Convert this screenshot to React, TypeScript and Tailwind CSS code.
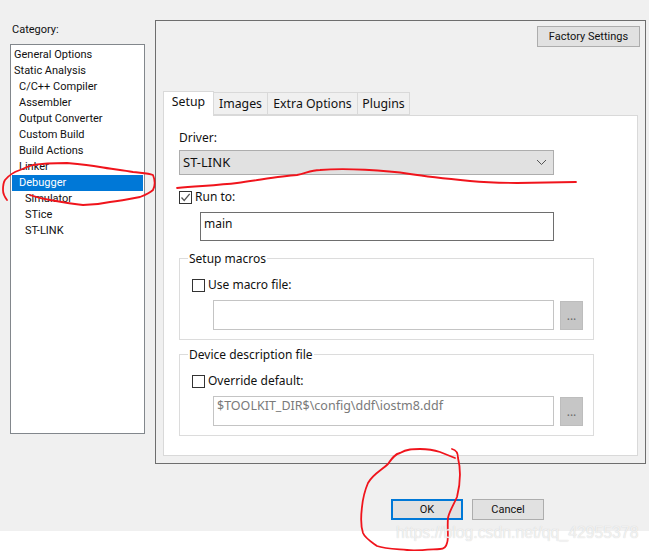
const CATEGORIES = [
  { label: "General Options", indent: "pl-[2px]" },
  { label: "Static Analysis", indent: "pl-[2px]" },
  { label: "C/C++ Compiler", indent: "pl-[7px]" },
  { label: "Assembler", indent: "pl-[7px]" },
  { label: "Output Converter", indent: "pl-[7px]" },
  { label: "Custom Build", indent: "pl-[7px]" },
  { label: "Build Actions", indent: "pl-[7px]" },
  { label: "Linker", indent: "pl-[7px]" },
  { label: "Debugger", indent: "pl-[7px]", active: true },
  { label: "Simulator", indent: "pl-[13px]" },
  { label: "STice", indent: "pl-[13px]" },
  { label: "ST-LINK", indent: "pl-[13px]" },
];

const TABS = [
  { label: "Setup", width: "w-[51px]" },
  { label: "Images", width: "w-[55px]" },
  { label: "Extra Options", width: "w-[91px]" },
  { label: "Plugins", width: "w-[53px]" },
];

function Checkbox({ checked, label }: { checked?: boolean; label: string }) {
  return (
    <div className="flex items-center gap-[3px] h-[14px]">
      <div className="w-[13px] h-[13px] border border-[#333333] bg-white flex items-center justify-center">
        {checked && (
          <svg width="11" height="11" viewBox="0 0 11 11" fill="none">
            <path d="M1.5 5.5 L4.2 8.5 L9.7 1.8" stroke="#555555" strokeWidth="1.3" />
          </svg>
        )}
      </div>
      <span>{label}</span>
    </div>
  );
}

function FileGroup({ title, check, value }: { title: string; check: string; value?: string }) {
  return (
    <div className="relative w-[415px] h-[82px] border border-[#dcdcdc] pl-[12px] pt-[19px]">
      <span className="absolute left-[8px] top-[-8px] bg-white px-[1px]">{title}</span>
      <Checkbox label={check} />
      <div className="flex gap-[6px] mt-[8px] ml-[21px]">
        <div className="w-[341px] h-[30px] border border-[#c4c4c4] bg-white pl-[3px] pt-[1px] text-[12.5px] text-[#7a7a7a]">
          {value}
        </div>
        <div className="w-[23px] h-[29px] mt-[1px] bg-[#c6c6c6] border border-[#bdbdbd] flex items-center justify-center text-[#6d6d6d]">
          ...
        </div>
      </div>
    </div>
  );
}

function Ink() {
  return (
    <svg className="absolute inset-0 pointer-events-none" width="649" height="551" fill="none" stroke="#f0141c" strokeWidth="1.8" strokeLinecap="round" strokeLinejoin="round">
      <path d="M7 200 C4 196 3 193 3 190 C3 186 3 183 5 180 C9 175 14 172 20 170 C25 168 29 166 33 165 C45 163 55 163 67 163 C78 164 89 165 100 167 C111 169 122 170 133 172 C140 173 148 173 153 175 C155 180 155 186 153 190 C150 193 145 195 140 197 C130 199 120 201 110 202 C101 204 92 205 83 205 C72 204 61 202 50 200 C43 199 36 197 30 195" />
      <path d="M177 188 C200 186 220 185 237 183 C260 180 280 176 297 175 C305 174 310 170 320 170 C345 168 385 170 410 174 C430 177 450 179 470 181 C490 183 505 183 517 183 L576 182" />
      <path d="M452 449 C456 450 458 452 458 458 C461 470 460 485 457 497 C453 506 449 512 448 518 C447 528 449 538 447 543 C446 548 443 549 440 549 C425 550 415 551 407 550 C395 549 385 549 377 546 C370 541 365 538 363 533 C360 524 361 515 362 507 C363 497 365 490 368 483 C373 474 382 470 388 464 C392 458 395 454 400 453 C407 449 413 449 420 449 C428 449 434 450 440 452 C445 454 450 456 455 458" />
    </svg>
  );
}

export default function App() {
  return (
    <div className="relative w-[649px] h-[551px] overflow-hidden bg-white text-[12px] leading-[16px] text-[#111111] font-['Noto_Sans','Open_Sans',sans-serif]">
      {/* dialog */}
      <div className="h-[531px] bg-[#f0f0f0] pt-[20px] pl-[10px]">
        <div className="flex gap-[10px]">
          <div className="w-[135px] font-['Roboto',sans-serif] text-[11px]">
            <div className="h-[24px] pl-[2px] pt-[2px]">Category:</div>
            <div className="h-[390px] border border-[#82878c] bg-white pt-[2px] pl-[1px] pr-[1px]">
              {CATEGORIES.map((c) => (
                <div
                  key={c.label}
                  className={`h-[16px] ${c.indent} ${c.active ? "bg-[#0078d7] text-white" : ""}`}
                >
                  {c.label}
                </div>
              ))}
            </div>
          </div>

          <div className="w-[491px] h-[444px] border border-[#6e6e6e] pl-[7px] pt-[5px]">
            <div className="flex justify-end pr-[5px]">
              <button className="w-[103px] h-[21px] bg-[#e1e1e1] border border-[#adadad] font-['Roboto',sans-serif] text-[11px]">
                Factory Settings
              </button>
            </div>

            {/* tabs */}
            <div className="flex items-end mt-[43px] h-[25px] text-[12.3px]">
              {TABS.map((t, i) => (
                <div
                  key={t.label}
                  className={`${t.width} border border-[#d9d9d9] flex justify-center ${
                    i === 0
                      ? "h-[25px] bg-white border-b-0 pt-[2px] relative z-10 -mb-[1px]"
                      : "h-[23px] bg-[#f0f0f0] -ml-[1px] pt-[3px]"
                  }`}
                >
                  {t.label}
                </div>
              ))}
            </div>

            {/* tab page */}
            <div className="w-[475px] h-[341px] border border-[#d9d9d9] bg-white pl-[15px]">
              <div className="pt-[14px] h-[34px]">Driver:</div>
              <div className="w-[375px] h-[25px] bg-[#e1e1e1] border border-[#adadad] flex items-center justify-between pl-[3px] pr-[6px]">
                <span className="text-[13px] -mt-[1px]">ST-LINK</span>
                <svg width="11" height="7" viewBox="0 0 11 7" fill="none">
                  <path d="M1 1 L5.5 5.5 L10 1" stroke="#555555" strokeWidth="1" />
                </svg>
              </div>
              <div className="mt-[15px]">
                <Checkbox checked label="Run to:" />
              </div>
              <div className="w-[354px] h-[29px] ml-[21px] mt-[8px] border border-[#6e6e6e] bg-white px-[3px] pt-[3px]">
                main
              </div>
              <div className="flex flex-col gap-[14px] mt-[17px]">
                <FileGroup title="Setup macros" check="Use macro file:" />
                <FileGroup title="Device description file" check="Override default:" value="$TOOLKIT_DIR$\config\ddf\iostm8.ddf" />
              </div>
            </div>
          </div>
        </div>

        <div className="flex gap-[9px] ml-[381px] mt-[35px] font-['Roboto',sans-serif] text-[11px]">
          <button className="w-[72px] h-[21px] bg-[#e1e1e1] border-2 border-[#0078d7]">OK</button>
          <button className="w-[72px] h-[21px] bg-[#e1e1e1] border border-[#adadad]">Cancel</button>
        </div>
      </div>

      <Ink />

      {/* watermark */}
      <div className="absolute left-[396px] top-[523px] whitespace-nowrap text-[15.8px] leading-[20px] text-white/70 font-['Liberation_Sans',sans-serif] [text-shadow:0_0_1px_#c8c8c8]">
        https://blog.csdn.net/qq_42955378
      </div>
    </div>
  );
}
